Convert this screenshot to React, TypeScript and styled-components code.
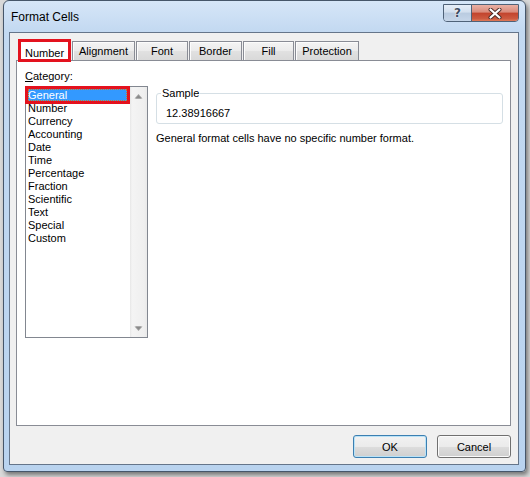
import React from 'react';
import styled, { createGlobalStyle } from 'styled-components';

const GlobalStyle = createGlobalStyle`
  html, body { margin: 0; padding: 0; }
  body {
    background: #d9d9d9;
    width: 530px;
    height: 477px;
    overflow: hidden;
    font-family: "Liberation Sans", Arial, sans-serif;
    font-size: 11px;
    color: #000;
  }
  * { box-sizing: border-box; }
`;

const Window = styled.div`
  margin-left: 3px;
  width: 523px;
  height: 472px;
  border: 1px solid #46566a;
  border-radius: 6px 6px 4px 4px;
  background: linear-gradient(#d6e6f8, #c3d9f1 30px, #b9d3ef);
  box-shadow: 2px 3px 4px rgba(0, 0, 0, 0.45);
  display: flex;
  flex-direction: column;
  padding: 0 6px 6px 5px;
`;

const TitleBar = styled.div`
  height: 31px;
  display: flex;
  align-items: flex-start;
  justify-content: space-between;
`;

const Title = styled.div`
  align-self: center;
  padding-left: 2px;
  font-size: 12px;
  color: #000;
`;

const CaptionButtons = styled.div`
  display: flex;
  margin-top: 3px;
  height: 18px;
  border: 1px solid #4f6278;
  border-radius: 0 0 4px 4px;
  overflow: hidden;
`;

const HelpButton = styled.div`
  width: 28px;
  display: flex;
  align-items: center;
  justify-content: center;
  background: linear-gradient(#e6eef8, #d2dfee 45%, #b9cbe0 50%, #c6d6e9);
  border-right: 1px solid #4f6278;
  font-family: "DejaVu Sans", sans-serif;
  font-weight: bold;
  font-size: 12px;
  color: #3d4d62;
  text-shadow: 0 0 2px #ffffff, 0 0 1px #ffffff;
`;

const CloseButton = styled.div`
  width: 46px;
  display: flex;
  align-items: center;
  justify-content: center;
  background: linear-gradient(#eab0a4, #d98a7a 45%, #c2432c 50%, #cc5a40 85%, #e07a58);
`;

const Client = styled.div`
  flex: 1;
  border: 1px solid #65758a;
  background: #f0f0f0;
  display: flex;
  flex-direction: column;
  padding: 6px 7px 6px 6px;
`;

const TabRow = styled.div`
  display: flex;
  align-items: flex-end;
  margin-left: 2px;
  margin-bottom: -2px;
  height: 23px;
  position: relative;
  z-index: 1;
`;

const Tab = styled.div<{ $w: number; $selected?: boolean }>`
  width: ${(p) => p.$w}px;
  text-align: center;
  line-height: 15px;
  ${(p) =>
    p.$selected
      ? `
    height: 23px;
    padding-top: 4px;
    background: #ffffff;
    border: 3px solid #e3121e;
  `
      : `
    height: 19px;
    margin-bottom: 2px;
    margin-left: 1px;
    padding-top: 2px;
    border: 1px solid #898c95;
    border-bottom: none;
    background: linear-gradient(#f4f4f4, #ebebeb 50%, #e1e1e1 51%, #d9d9d9);
    box-shadow: inset 1px 1px 0 #fcfcfc;
  `}
`;

const Panel = styled.div`
  height: 366px;
  width: 495px;
  background: #ffffff;
  border: 1px solid #898c95;
  padding: 9px 7px 0 8px;
  display: flex;
  align-items: flex-start;
`;

const LeftColumn = styled.div`
  display: flex;
  flex-direction: column;
`;

const FieldLabel = styled.div`
  line-height: 13px;
  margin-bottom: 3px;
  u { text-decoration: underline; }
`;

const ListBox = styled.div`
  width: 123px;
  height: 252px;
  border: 1px solid #828790;
  background: #ffffff;
  display: flex;
`;

const ListItems = styled.div`
  flex: 1;
  padding-top: 2px;
`;

const ListItem = styled.div<{ $selected?: boolean }>`
  position: relative;
  height: 13px;
  line-height: 13px;
  padding-left: 2px;
  white-space: nowrap;
  ${(p) =>
    p.$selected
      ? `
    background: #3399ff;
    color: #ffffff;
    &::before {
      content: "";
      position: absolute;
      left: 2px;
      right: 3px;
      top: 0;
      bottom: 1px;
      border: 1px dotted #c47a2c;
    }
    &::after {
      content: "";
      position: absolute;
      left: -1px;
      right: 0;
      top: -3px;
      bottom: -2px;
      border: 3px solid #e3121e;
    }
  `
      : ''}
`;

const ScrollBar = styled.div`
  width: 17px;
  display: flex;
  flex-direction: column;
  justify-content: space-between;
  background: linear-gradient(to right, #e6e6e6, #f4f4f4 2px, #efefef 14px, #e9e9e9);
`;

const ScrollArrow = styled.div`
  height: 17px;
  display: flex;
  align-items: center;
  justify-content: center;
`;

const RightColumn = styled.div`
  flex: 1;
  margin-left: 8px;
  margin-top: 17px;
`;

const GroupBox = styled.fieldset`
  margin: 0;
  padding: 7px 0 3px 4px;
  border: 1px solid #d5dfe5;
  border-radius: 3px;
  min-width: 0;
`;

const GroupLegend = styled.legend`
  padding: 0 1px;
  line-height: 13px;
`;

const SampleValue = styled.div`
  padding-left: 5px;
  line-height: 13px;
`;

const Description = styled.div`
  margin-top: 8px;
  line-height: 13px;
`;

const ButtonRow = styled.div`
  margin-top: 9px;
  display: flex;
  justify-content: flex-end;
  gap: 10px;
`;

const Button = styled.div<{ $default?: boolean }>`
  width: 74px;
  height: 23px;
  border-radius: 3px;
  border: 1px solid ${(p) => (p.$default ? '#3c7fb1' : '#707070')};
  background: linear-gradient(#f2f2f2, #ebebeb 50%, #dddddd 51%, #cfcfcf);
  box-shadow: inset 0 0 0 1px ${(p) => (p.$default ? '#b9e2f7' : '#fbfbfb')};
  display: flex;
  align-items: center;
  justify-content: center;
`;

const tabs: { label: string; w: number; selected?: boolean }[] = [
  { label: 'Number', w: 53, selected: true },
  { label: 'Alignment', w: 63 },
  { label: 'Font', w: 52 },
  { label: 'Border', w: 53 },
  { label: 'Fill', w: 51 },
  { label: 'Protection', w: 64 },
];

const categories = [
  'General',
  'Number',
  'Currency',
  'Accounting',
  'Date',
  'Time',
  'Percentage',
  'Fraction',
  'Scientific',
  'Text',
  'Special',
  'Custom',
];

const UpArrow = () => (
  <svg width="9" height="6" viewBox="0 0 9 6">
    <path d="M0.5 5.5 L4.5 1 L8.5 5.5 Z" fill="#a4a4a4" />
    <path d="M1.5 5.5 L4.5 2.2 L7.5 5.5 Z" fill="#8a8a8a" />
  </svg>
);

const DownArrow = () => (
  <svg width="9" height="6" viewBox="0 0 9 6">
    <path d="M0.5 0.5 L4.5 5 L8.5 0.5 Z" fill="#a4a4a4" />
    <path d="M1.5 0.5 L4.5 3.8 L7.5 0.5 Z" fill="#8a8a8a" />
  </svg>
);

const CloseIcon = () => (
  <svg width="14" height="11" viewBox="0 0 14 11">
    <path d="M2.5 1.5 L11.5 9.5 M11.5 1.5 L2.5 9.5" stroke="#4a2a26" strokeWidth="4" strokeLinecap="round" />
    <path d="M2.5 1.5 L11.5 9.5 M11.5 1.5 L2.5 9.5" stroke="#ffffff" strokeWidth="2.2" strokeLinecap="round" />
  </svg>
);

export default function App() {
  return (
    <>
      <GlobalStyle />
      <Window>
        <TitleBar>
          <Title>Format Cells</Title>
          <CaptionButtons>
            <HelpButton>?</HelpButton>
            <CloseButton>
              <CloseIcon />
            </CloseButton>
          </CaptionButtons>
        </TitleBar>
        <Client>
          <TabRow>
            {tabs.map((t) => (
              <Tab key={t.label} $w={t.w} $selected={t.selected}>
                {t.label}
              </Tab>
            ))}
          </TabRow>
          <Panel>
            <LeftColumn>
              <FieldLabel>
                <u>C</u>ategory:
              </FieldLabel>
              <ListBox>
                <ListItems>
                  {categories.map((c, i) => (
                    <ListItem key={c} $selected={i === 0}>
                      {c}
                    </ListItem>
                  ))}
                </ListItems>
                <ScrollBar>
                  <ScrollArrow>
                    <UpArrow />
                  </ScrollArrow>
                  <ScrollArrow>
                    <DownArrow />
                  </ScrollArrow>
                </ScrollBar>
              </ListBox>
            </LeftColumn>
            <RightColumn>
              <GroupBox>
                <GroupLegend>Sample</GroupLegend>
                <SampleValue>12.38916667</SampleValue>
              </GroupBox>
              <Description>General format cells have no specific number format.</Description>
            </RightColumn>
          </Panel>
          <ButtonRow>
            <Button $default>OK</Button>
            <Button>Cancel</Button>
          </ButtonRow>
        </Client>
      </Window>
    </>
  );
}
